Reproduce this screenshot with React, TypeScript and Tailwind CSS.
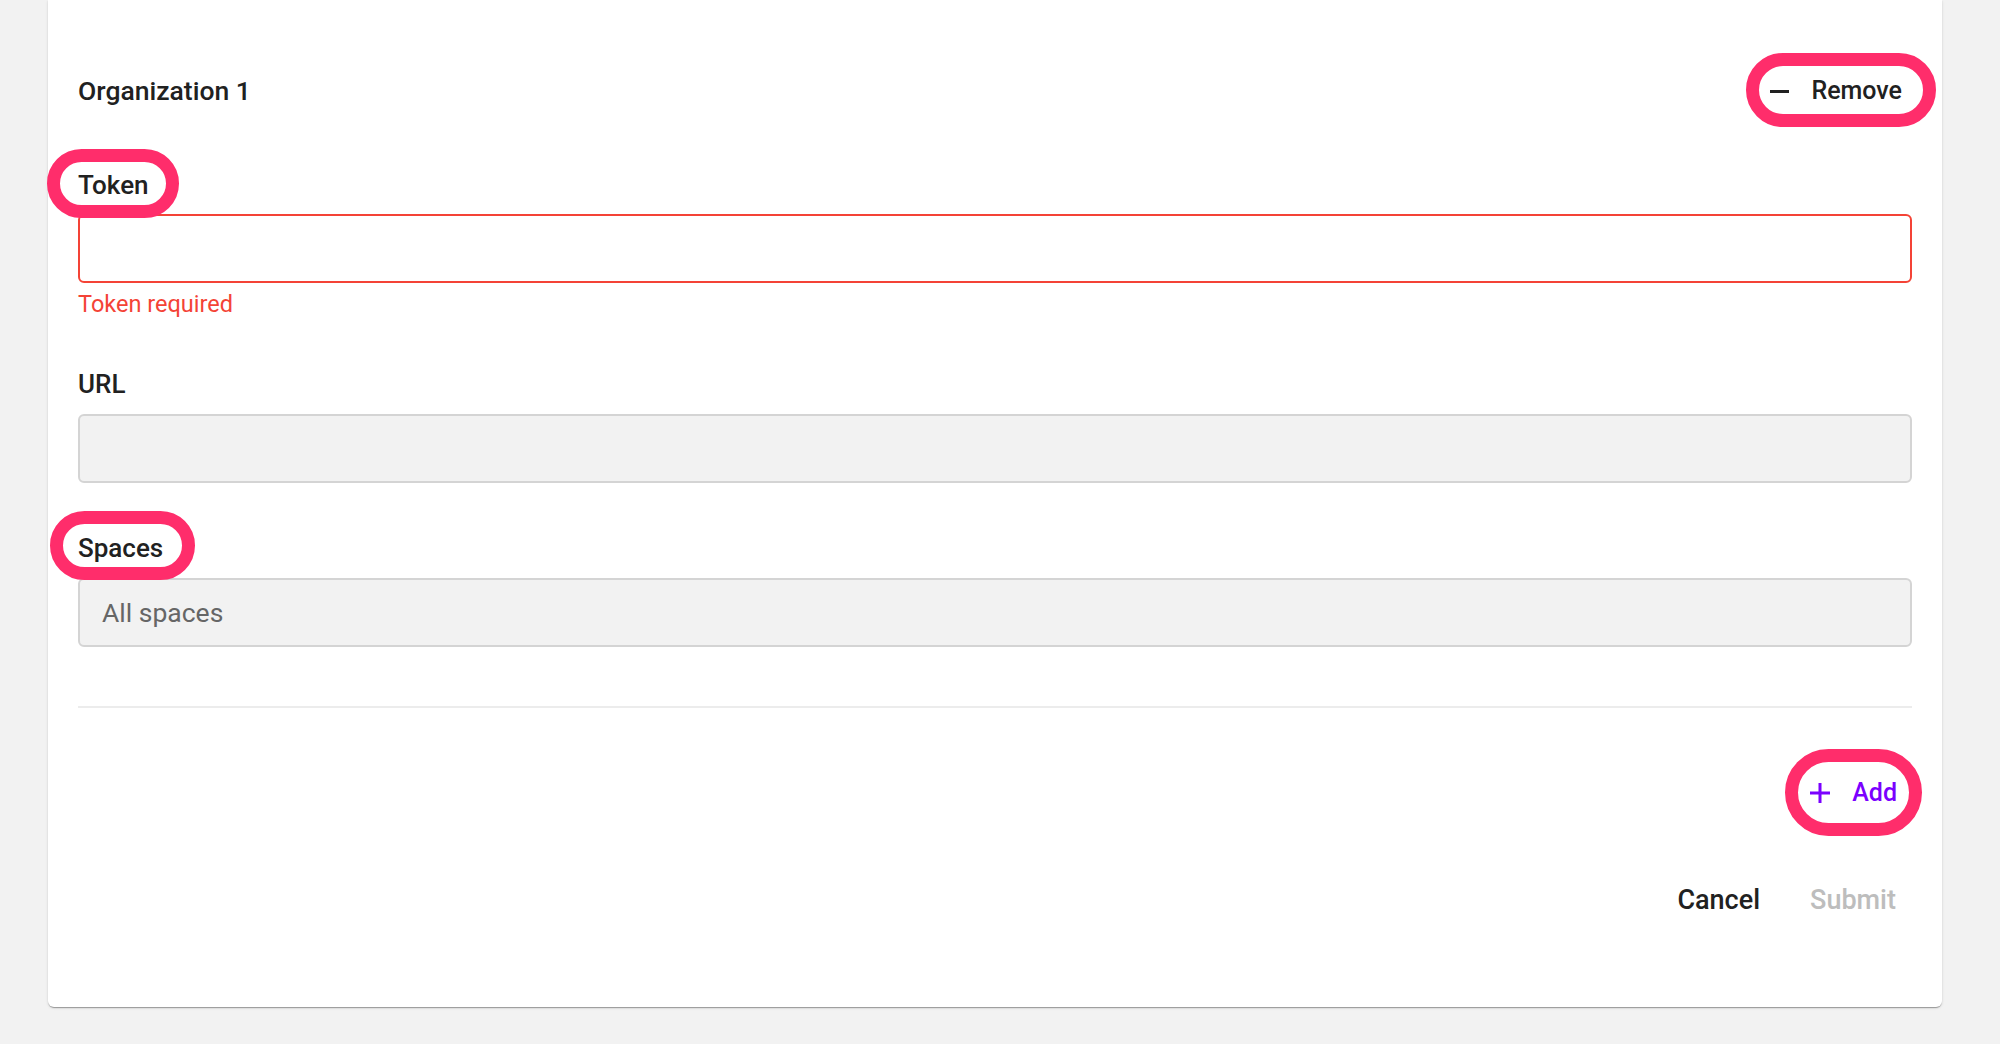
import type { ReactNode } from 'react';

const font = { fontFamily: 'Roboto, "Noto Sans", Arial, sans-serif' };

// Annotation ring drawn over a control
function Ring({ className }: { className: string }) {
  return (
    <span
      className={`pointer-events-none absolute rounded-full border-[13px] border-[#ff2d6b] ${className}`}
    />
  );
}

function Label({ children, ring }: { children: ReactNode; ring?: string }) {
  return (
    <div className="flex">
      <span className="relative inline-block text-[26px] leading-[30px] font-medium text-[#212121]">
        {children}
        {ring && <Ring className={ring} />}
      </span>
    </div>
  );
}

export default function App() {
  return (
    <div className="min-h-[1044px] w-full bg-[#f2f2f2]" style={font}>
      <div className="ml-[48px] w-[1894px] rounded-b-[6px] bg-white px-[30px] pt-[67px] pb-[83px] shadow-[0_2px_1px_-1px_rgba(0,0,0,0.2),0_1px_1px_0_rgba(0,0,0,0.14),0_1px_3px_0_rgba(0,0,0,0.12)]">
        {/* Header */}
        <div className="flex h-[48px] items-center justify-between">
          <h2 className="text-[26.5px] leading-[30px] font-medium text-[#212121]">Organization 1</h2>
          <button className="relative flex h-[48px] items-center gap-[22px] pl-[11px] pr-[10px] text-[25px] font-medium text-[#212121]">
            <span className="block h-[3px] w-[19px] bg-[#212121]" />
            <span>Remove</span>
            <Ring className="-left-[13px] -right-[24px] -top-[14px] -bottom-[12px]" />
          </button>
        </div>

        {/* Token */}
        <div className="mt-[55px]">
          <Label ring="-left-[31px] -right-[30px] -top-[21px] -bottom-[18px]">Token</Label>
        </div>
        <div className="mt-[14px] h-[69px] w-full rounded-[6px] border-2 border-[#f44336] bg-white" />
        <p className="mt-[8px] text-[23.5px] leading-[26px] text-[#f44336]">Token required</p>

        {/* URL */}
        <div className="mt-[52px]">
          <Label>URL</Label>
        </div>
        <div className="mt-[15px] h-[69px] w-full rounded-[6px] border-2 border-[#d4d4d4] bg-[#f2f2f2]" />

        {/* Spaces */}
        <div className="mt-[50px]">
          <Label ring="-left-[28px] -right-[32px] -top-[22px] -bottom-[17px]">Spaces</Label>
        </div>
        <div className="mt-[15px] flex h-[69px] w-full items-center rounded-[6px] border-2 border-[#d4d4d4] bg-[#f2f2f2] pl-[22px] text-[26.5px] text-[#666666]">
          All spaces
        </div>

        <div className="mt-[59px] h-[2px] w-full bg-[#ececec]" />

        {/* Add */}
        <div className="mt-[61px] flex justify-end">
          <button className="relative flex h-[48px] items-center gap-[22px] pl-[11px] pr-[15px] text-[25px] font-medium text-[#7b00ff]">
            <svg width="20" height="20" viewBox="0 0 20 20" className="block">
              <path d="M10 0v20M0 10h20" stroke="#7b00ff" strokeWidth="3" />
            </svg>
            <span>Add</span>
            <Ring className="-left-[14px] -right-[10px] -top-[20px] -bottom-[19px]" />
          </button>
        </div>

        {/* Actions */}
        <div className="mt-[59px] flex justify-end gap-[18px]">
          <button className="h-[48px] px-[16px] text-[27px] font-medium text-[#212121]">Cancel</button>
          <button className="h-[48px] px-[16px] text-[27px] font-medium text-[#bdbdbd]" disabled>
            Submit
          </button>
        </div>
      </div>
    </div>
  );
}
